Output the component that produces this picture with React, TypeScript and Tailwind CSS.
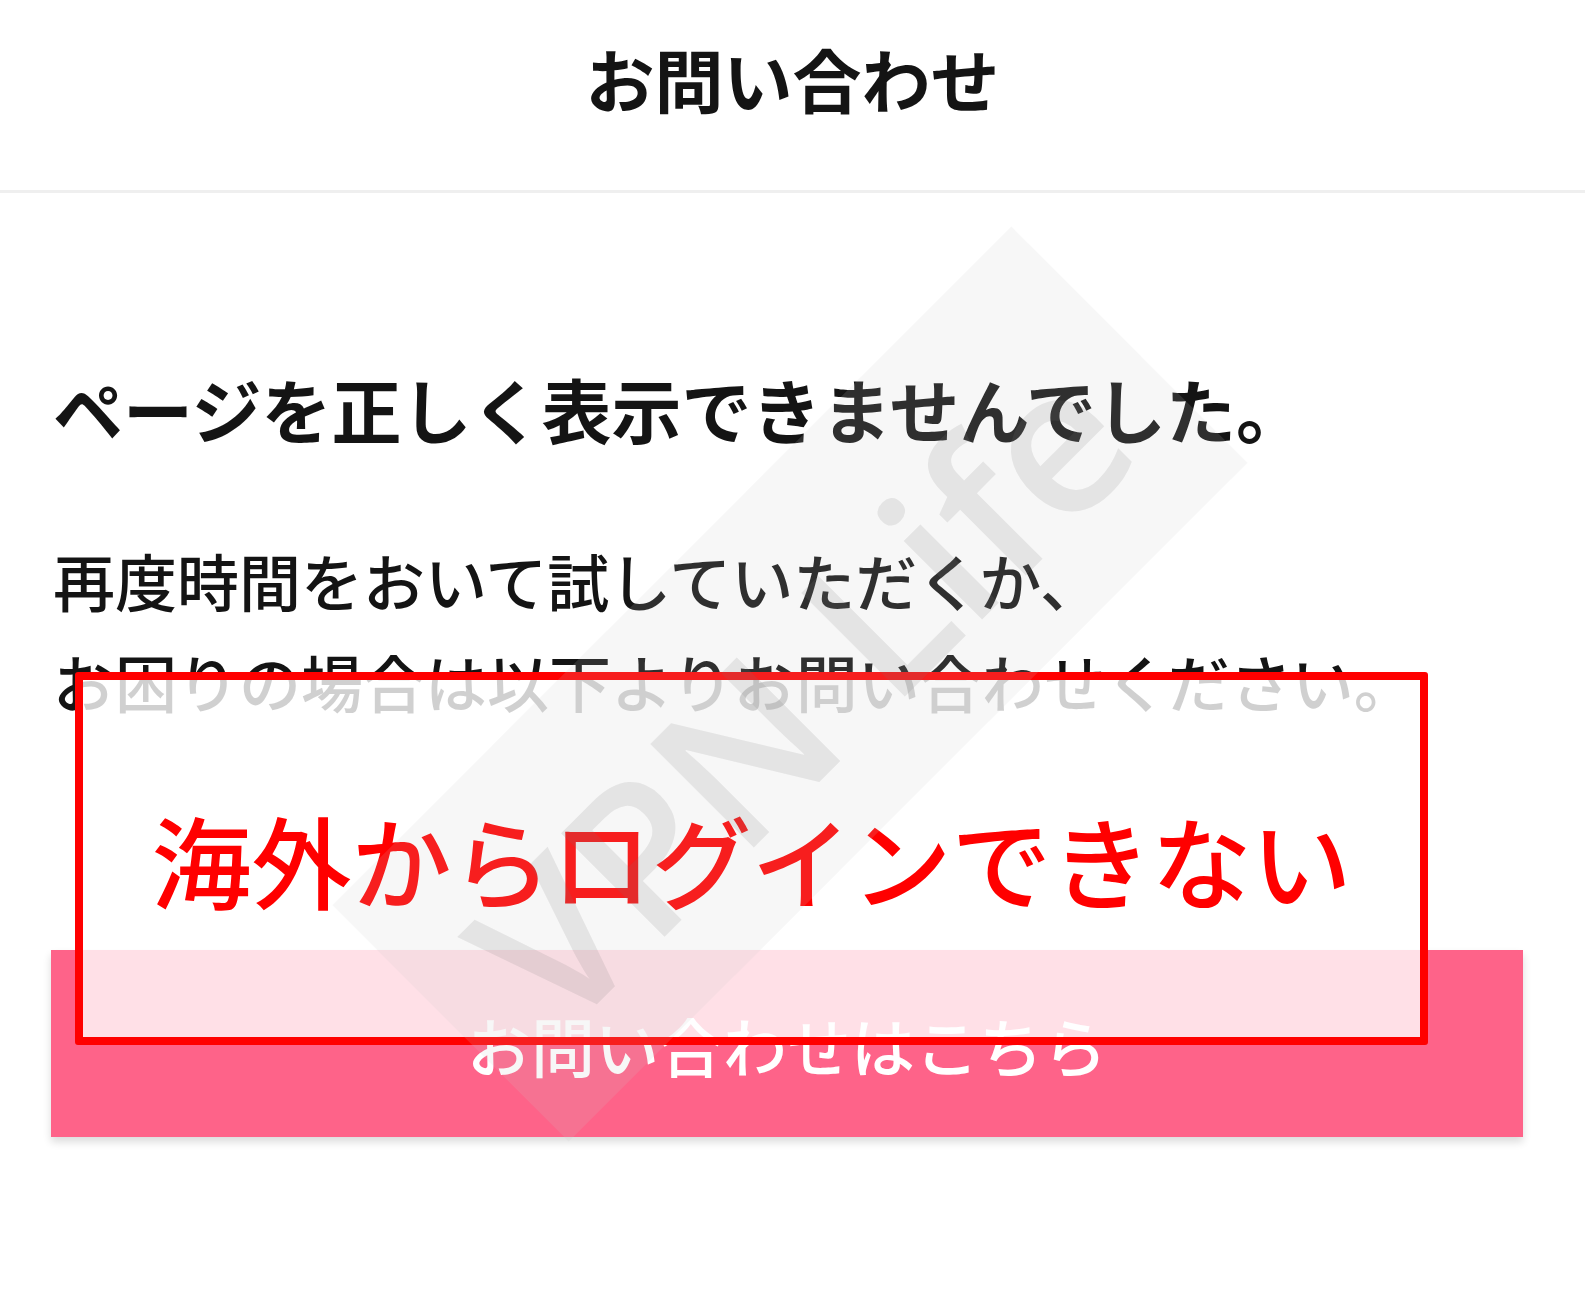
export default function App() {
  return (
    <div
      className="relative min-h-[1296px] w-full overflow-hidden bg-white text-[#141414]"
      style={{ fontFamily: '"Noto Sans CJK JP", "Noto Sans", sans-serif' }}
    >
      <header className="h-[193px] border-b-[3px] border-[#efefef] pt-[44px] text-center">
        <h1 className="text-[69px] font-bold leading-none">お問い合わせ</h1>
      </header>

      <main className="pl-[51px] pr-[62px]">
        <h2 className="mt-[181px] pl-[2px] text-[70px] font-bold leading-none">
          ページを正しく表示できませんでした。
        </h2>
        <p className="mt-[86px] pl-[2px] text-[62px] font-medium leading-[101px]">
          再度時間をおいて試していただくか、
          <br />
          お困りの場合は以下よりお問い合わせください。
        </p>
        <button className="mt-[218px] flex h-[187px] w-full items-center justify-center bg-[#fe6389] text-[64px] font-medium text-white shadow-[0_5px_8px_rgba(0,0,0,0.14)]">
          お問い合わせはこちら
        </button>
      </main>

      {/* red annotation box */}
      <div className="absolute left-[75px] top-[672px] flex h-[373px] w-[1353px] items-center justify-center rounded-[3px] border-[8px] border-[#ff0000] bg-white/80">
        <span className="text-[100px] font-medium leading-none text-[#ff0000]">海外からログインできない</span>
      </div>

      {/* watermark */}
      <div className="pointer-events-none absolute left-[310px] top-[517px] flex h-[334px] w-[960px] -rotate-45 items-center justify-center bg-[rgba(200,200,200,0.15)]">
        <span
          className="pt-[20px] text-[205px] font-semibold leading-none text-[rgba(120,120,120,0.15)]"
          style={{ fontFamily: '"Open Sans", sans-serif' }}
        >
          VPN Life
        </span>
      </div>
    </div>
  );
}
